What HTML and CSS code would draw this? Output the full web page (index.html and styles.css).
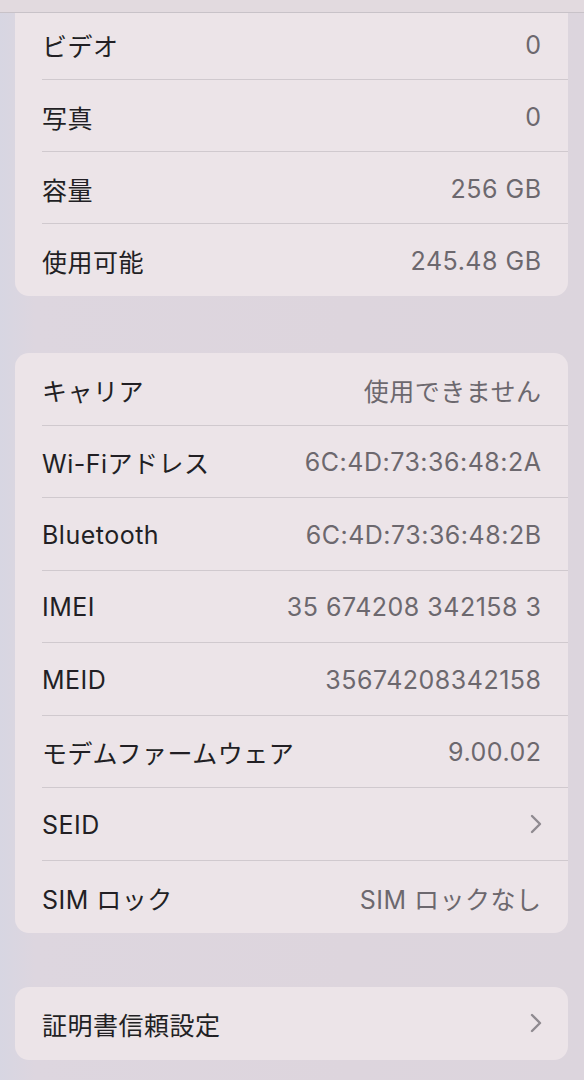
FILE: index.html
```html
<!DOCTYPE html>
<html lang="ja">
<head>
    <meta charset="UTF-8">
    <meta name="viewport" content="width=device-width, initial-scale=1.0">
    <title>情報</title>
    <link rel="stylesheet" href="styles.css">
</head>
<body>

    <div class="top-bar"></div>

    <div class="screen">
        <!-- Storage -->
        <div class="group group-cut">
            <div class="row"><span class="label">ビデオ</span><span class="value">0</span></div>
            <div class="row"><span class="label">写真</span><span class="value">0</span></div>
            <div class="row"><span class="label">容量</span><span class="value">256 GB</span></div>
            <div class="row"><span class="label">使用可能</span><span class="value">245.48 GB</span></div>
        </div>

        <!-- Network -->
        <div class="group">
            <div class="row"><span class="label">キャリア</span><span class="value">使用できません</span></div>
            <div class="row"><span class="label">Wi-Fiアドレス</span><span class="value">6C:4D:73:36:48:2A</span></div>
            <div class="row"><span class="label">Bluetooth</span><span class="value">6C:4D:73:36:48:2B</span></div>
            <div class="row"><span class="label">IMEI</span><span class="value">35 674208 342158 3</span></div>
            <div class="row"><span class="label">MEID</span><span class="value">35674208342158</span></div>
            <div class="row"><span class="label">モデムファームウェア</span><span class="value">9.00.02</span></div>
            <div class="row">
                <span class="label">SEID</span>
                <svg class="chevron" width="12" height="20" viewBox="0 0 12 20"><path d="M2 2 L10 10 L2 18" /></svg>
            </div>
            <div class="row"><span class="label">SIM ロック</span><span class="value">SIM ロックなし</span></div>
        </div>

        <!-- Certificates -->
        <div class="group group-last">
            <div class="row">
                <span class="label">証明書信頼設定</span>
                <svg class="chevron" width="12" height="20" viewBox="0 0 12 20"><path d="M2 2 L10 10 L2 18" /></svg>
            </div>
        </div>
    </div>

</body>
</html>
```

FILE: styles.css
```css
/* General Styles */
body {
    margin: 0;
    padding: 0;
    font-family: 'Inter', 'Noto Sans CJK JP', sans-serif;
    background: linear-gradient(90deg, #d7d6e2 0%, #ddd6df 6%, #ddd5dd 60%, #dcd5dd 100%);
    height: 1080px;
    overflow: hidden;
}

/* Strip of the navigation area at the very top */
.top-bar {
    position: absolute;
    top: 0;
    left: 0;
    right: 0;
    height: 12px;
    background-color: #e2dadf;
    border-bottom: 1px solid #c8c2c8;
    z-index: 2;
}

.screen {
    padding: 8px 16px 0 15px;
}

.group {
    background-color: #ece4e8;
    border-radius: 14px;
    padding-left: 27px;
    margin-top: 57px;
}

.group-cut {
    margin-top: 0;
    border-radius: 0 0 14px 14px;
}

.group-cut .row {
    height: 72px;
}

.group-last {
    margin-top: 54px;
}

.row {
    height: 72.5px;
    box-sizing: border-box;
    display: flex;
    align-items: center;
    justify-content: space-between;
    padding-right: 27px;
    border-bottom: 1px solid #d0c9ce;
    font-size: 25px;
    letter-spacing: 0.5px;
}

.row:last-child {
    border-bottom: none;
}

.label {
    color: #221f24;
    padding-top: 2px;
}

.value {
    color: #6c686e;
    padding-top: 2px;
    margin-right: -0.5px;
}

.chevron {
    margin-right: -1px;
}

.chevron path {
    fill: none;
    stroke: #8f8a90;
    stroke-width: 2.4;
    stroke-linecap: round;
    stroke-linejoin: round;
}
```
